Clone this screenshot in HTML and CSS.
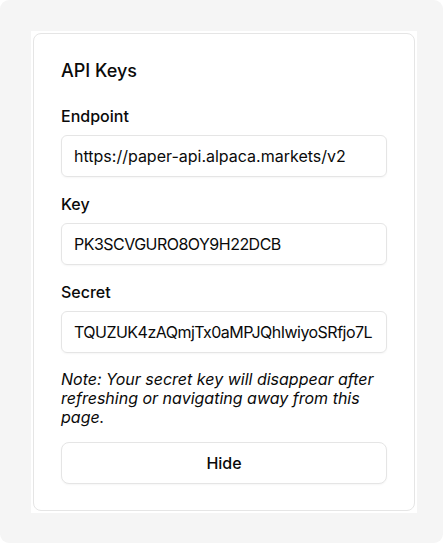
FILE: index.html
```html
<!DOCTYPE html>
<html>
<head>
<meta charset="utf-8">
<link rel="stylesheet" href="styles.css">
</head>
<body>
<div class="frame">
  <div class="wrap">
    <section class="card">
      <h2 class="title">API Keys</h2>
      <div class="field">
        <label class="label">Endpoint</label>
        <div class="input"><span class="value">https://paper-api.alpaca.markets/v2</span></div>
      </div>
      <div class="field">
        <label class="label">Key</label>
        <div class="input"><span class="value code">PK3SCVGURO8OY9H22DCB</span></div>
      </div>
      <div class="field">
        <label class="label">Secret</label>
        <div class="input"><span class="value code">TQUZUK4zAQmjTx0aMPJQhIwiyoSRfjo7L</span></div>
      </div>
      <p class="note">Note: Your secret key will disappear after refreshing or navigating away from this page.</p>
      <button class="btn">Hide</button>
    </section>
  </div>
</div>
</body>
</html>
```

FILE: styles.css
```css
* { box-sizing: border-box; }
html, body { margin: 0; padding: 0; background: #ffffff; }
body {
  font-family: Inter, "Noto Sans", sans-serif;
  color: #0a0a0a;
}
.frame {
  width: 443px;
  height: 543px;
  background: #f5f5f5;
  border-radius: 9px;
  padding: 31px 26px 29px 31px;
}
.wrap {
  background: #ffffff;
  padding: 2px;
}
.card {
  border: 1px solid #e5e5e5;
  border-radius: 8px;
  padding: 23px 27px 26px 27px;
  display: flex;
  flex-direction: column;
}
.title {
  margin: 0 0 22px 0;
  font-size: 18px;
  line-height: 28px;
  font-weight: 500;
}
.field {
  display: flex;
  flex-direction: column;
  gap: 10px;
  margin-bottom: 18px;
}
.label {
  font-size: 16px;
  line-height: 18px;
  font-weight: 500;
}
.input {
  height: 42px;
  border: 1px solid #e5e5e5;
  border-radius: 6px;
  padding: 8px 12px;
  font-size: 16px;
  line-height: 24px;
  box-shadow: 0 1px 2px rgba(0,0,0,0.04);
  display: flex;
}
.value {
  display: block;
  flex: 1;
  min-width: 0;
  white-space: nowrap;
  overflow: hidden;
}
.code {
  letter-spacing: -0.52px;
}
.note {
  margin: -1px 0 15px 0;
  font-size: 16px;
  line-height: 19px;
  font-style: italic;
}
.btn {
  height: 42px;
  border: 1px solid #e5e5e5;
  border-radius: 8px;
  background: #ffffff;
  font-family: inherit;
  font-size: 16px;
  font-weight: 500;
  color: #0a0a0a;
  box-shadow: 0 1px 2px rgba(0,0,0,0.04);
}
```
